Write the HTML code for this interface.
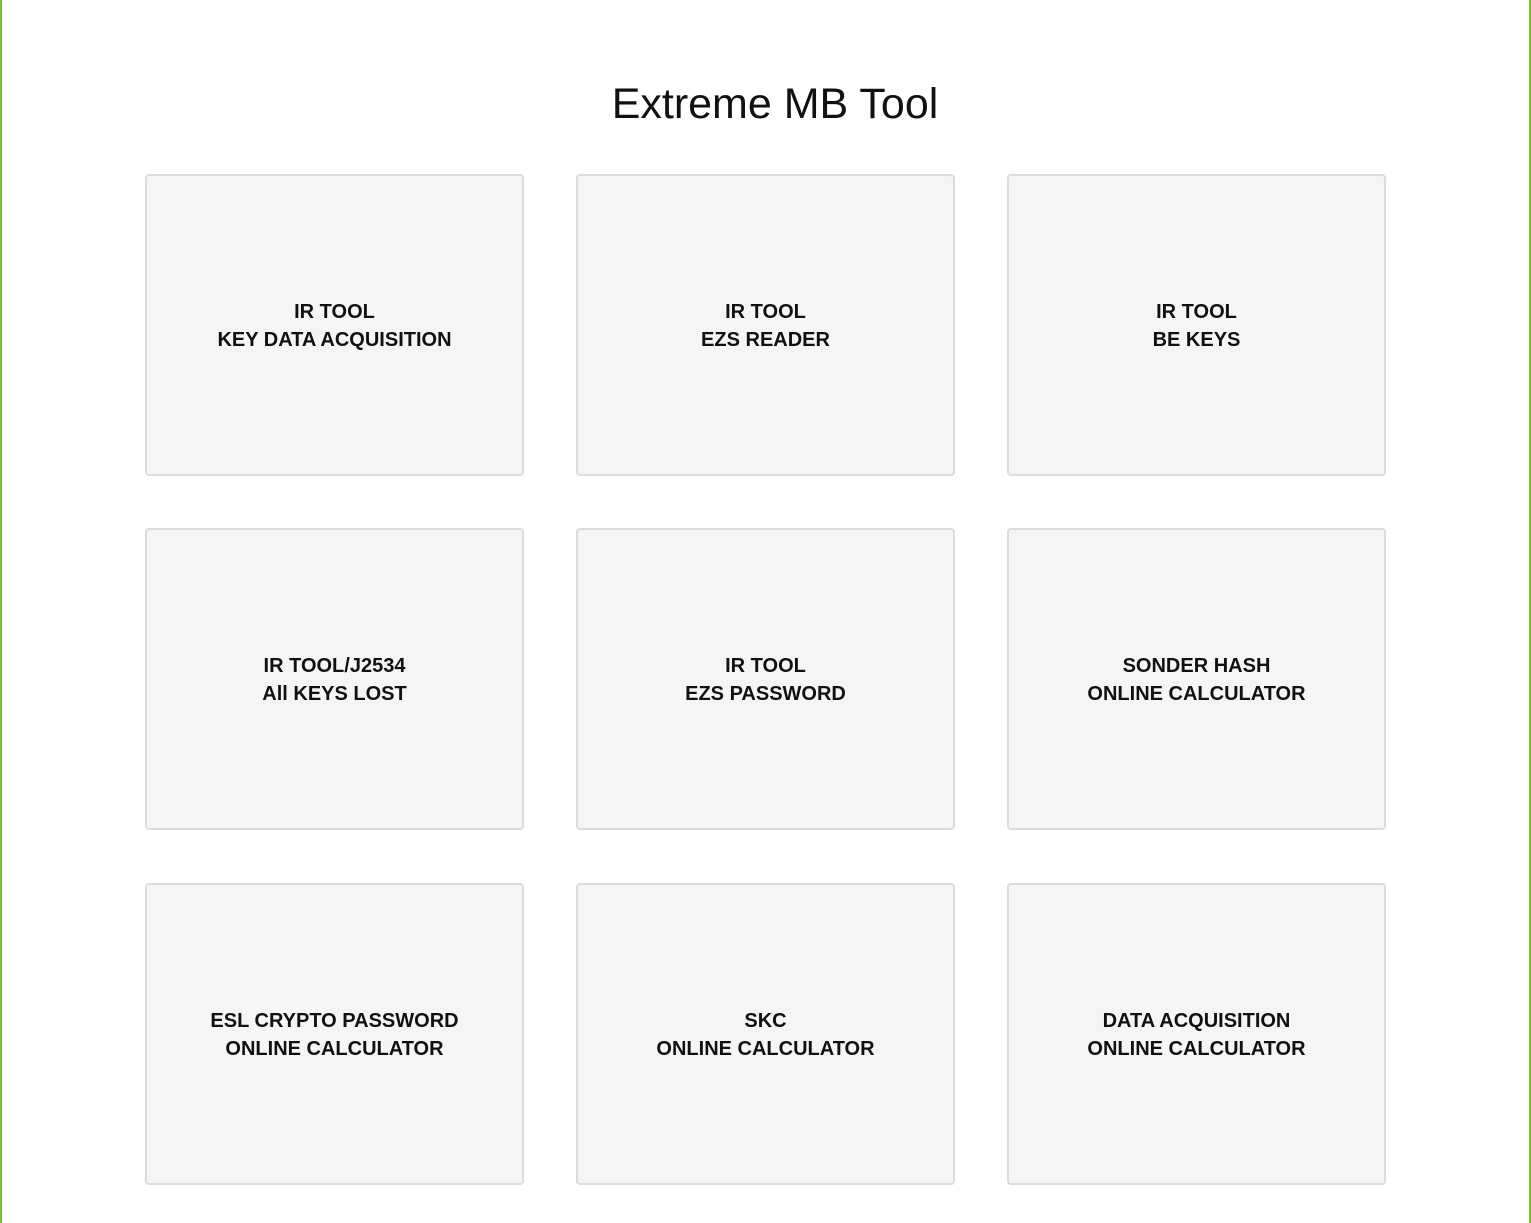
<!DOCTYPE html>
<html><head><style>
html,body{margin:0;padding:0}
body{width:1531px;height:1223px;background:#fff;position:relative;overflow:hidden;font-family:"Liberation Sans",sans-serif}
.gl{position:absolute;left:0;top:0;width:2px;height:1223px;background:#7cbf3f}
.gr{position:absolute;left:1529px;top:0;width:2px;height:1223px;background:#7cbf3f}
h1{position:absolute;left:0;width:1550px;top:78px;margin:0;text-align:center;font-weight:normal;font-size:43px;line-height:52px;color:#111}
.c{position:absolute;width:375px;height:298px;background:#f5f5f5;border:2px solid #dcdcdc;border-radius:4px;display:flex;align-items:center;justify-content:center;text-align:center;font-weight:bold;font-size:20px;line-height:28px;color:#111;box-sizing:content-box;padding-top:2px;height:296px}
</style></head><body>
<div class="gl"></div><div class="gr"></div>
<h1>Extreme MB Tool</h1>
<div class="c" style="left:145px;top:174px">IR TOOL<br>KEY DATA ACQUISITION</div>
<div class="c" style="left:576px;top:174px">IR TOOL<br>EZS READER</div>
<div class="c" style="left:1007px;top:174px">IR TOOL<br>BE KEYS</div>
<div class="c" style="left:145px;top:528px">IR TOOL/J2534<br>All KEYS LOST</div>
<div class="c" style="left:576px;top:528px">IR TOOL<br>EZS PASSWORD</div>
<div class="c" style="left:1007px;top:528px">SONDER HASH<br>ONLINE CALCULATOR</div>
<div class="c" style="left:145px;top:883px">ESL CRYPTO PASSWORD<br>ONLINE CALCULATOR</div>
<div class="c" style="left:576px;top:883px">SKC<br>ONLINE CALCULATOR</div>
<div class="c" style="left:1007px;top:883px">DATA ACQUISITION<br>ONLINE CALCULATOR</div>
</body></html>
